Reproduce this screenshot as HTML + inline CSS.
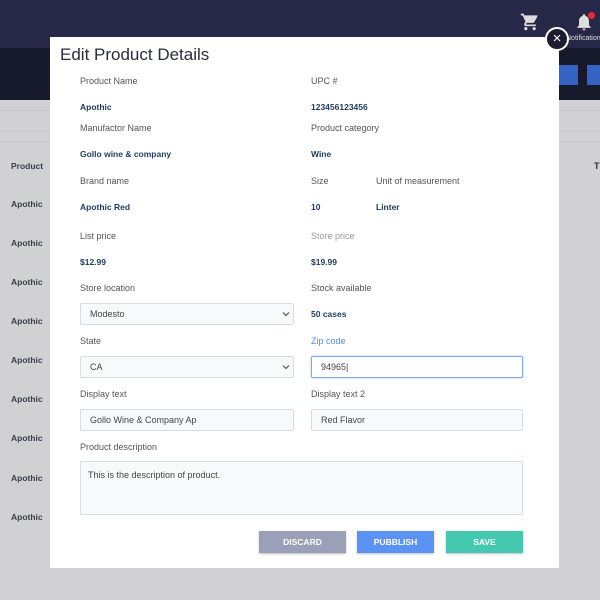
<!DOCTYPE html>
<html><head><style>
*{margin:0;padding:0;box-sizing:border-box}
body{width:600px;height:600px;position:relative;overflow:hidden;background:#d1d1d4;font-family:"Liberation Sans",sans-serif}
.a{position:absolute;white-space:nowrap}
.l{font-size:9px;color:#555;line-height:12px}
.v{font-size:8.5px;color:#1f3a5e;font-weight:bold;line-height:12px}
.box{position:absolute;background:#f8f9fb;border:1px solid #d8dce2;border-radius:2px;font-size:9px;color:#444;padding-left:9px;display:flex;align-items:center}
.btn{position:absolute;height:22px;top:531px;color:#fff;font-size:8.5px;font-weight:bold;display:flex;align-items:center;justify-content:center;box-shadow:0 1px 2px rgba(0,0,0,.25)}
.row{position:absolute;left:0;width:60px;font-size:8.5px;font-weight:bold;color:#3a3d4a;padding-left:11px}
.sep{position:absolute;left:0;width:600px;height:1px;background:#c4c6cc}
</style></head><body>
<div class="a" style="left:0;top:0;width:600px;height:48px;background:#272848"></div>
<div class="a" style="left:0;top:48px;width:600px;height:52px;background:#171a2b"></div>
<div class="a" style="left:520px;top:65px;width:58px;height:20px;background:#3563c4"></div>
<div class="a" style="left:587px;top:65px;width:20px;height:20px;background:#3563c4"></div>
<div class="sep" style="top:110px"></div>
<div class="sep" style="top:131px"></div>
<div class="sep" style="top:141px"></div>
<div class="row" style="top:161px">Product</div>
<div class="a" style="left:594px;top:161px;font-size:9px;font-weight:bold;color:#333">T</div>
<div class="row" style="top:199px">Apothic</div>
<div class="row" style="top:238px">Apothic</div>
<div class="row" style="top:277px">Apothic</div>
<div class="row" style="top:316px">Apothic</div>
<div class="row" style="top:355px">Apothic</div>
<div class="row" style="top:394px">Apothic</div>
<div class="row" style="top:433px">Apothic</div>
<div class="row" style="top:473px">Apothic</div>
<div class="row" style="top:512px">Apothic</div>
<!-- cart -->
<svg class="a" style="left:520px;top:12px" width="20" height="20" viewBox="0 0 24 24"><path fill="#ddd" d="M7 18c-1.1 0-2 .9-2 2s.9 2 2 2 2-.9 2-2-.9-2-2-2zM1 2v2h2l3.6 7.6L5.2 14c-.1.3-.2.6-.2 1 0 1.1.9 2 2 2h12v-2H7.4c-.1 0-.2-.1-.2-.2v-.1l.9-1.7h7.4c.8 0 1.4-.4 1.7-1l3.6-6.5L21 4H5.2l-.9-2H1zm16 16c-1.1 0-2 .9-2 2s.9 2 2 2 2-.9 2-2-.9-2-2-2z"/></svg>
<svg class="a" style="left:574px;top:11px" width="20" height="22" viewBox="0 0 24 24"><path fill="#ddd" d="M12 22c1.1 0 2-.9 2-2h-4c0 1.1.9 2 2 2zm6-6v-5c0-3.1-1.6-5.6-4.5-6.3V4c0-.8-.7-1.5-1.5-1.5s-1.5.7-1.5 1.5v.7C7.6 5.4 6 7.9 6 11v5l-2 2v1h16v-1l-2-2z"/></svg>
<div class="a" style="left:588px;top:12px;width:7px;height:7px;border-radius:50%;background:#e8283c"></div>
<div class="a" style="left:566px;top:35px;font-size:7px;color:#ddd">Notifications</div>
<!-- modal -->
<div class="a" style="left:50px;top:37px;width:509px;height:531px;background:#fff"></div>
<div class="a" style="left:545px;top:27px;width:24px;height:24px;border-radius:50%;background:#1c1d30;border:2px solid #fff;color:#fff;font-size:15px;line-height:19px;text-align:center">×</div>
<div class="a" style="left:60px;top:44px;font-size:17px;color:#2a2d38;line-height:22px">Edit Product Details</div>
<div class="a l" style="left:80px;top:75px">Product Name</div>
<div class="a l" style="left:311px;top:75px">UPC #</div>
<div class="a v" style="left:80px;top:101px">Apothic</div>
<div class="a v" style="left:311px;top:101px">123456123456</div>
<div class="a l" style="left:80px;top:122px">Manufactor Name</div>
<div class="a l" style="left:311px;top:122px">Product category</div>
<div class="a v" style="left:80px;top:148px">Gollo wine &amp; company</div>
<div class="a v" style="left:311px;top:148px">Wine</div>
<div class="a l" style="left:80px;top:175px">Brand name</div>
<div class="a l" style="left:311px;top:175px">Size</div>
<div class="a l" style="left:376px;top:175px">Unit of measurement</div>
<div class="a v" style="left:80px;top:201px">Apothic Red</div>
<div class="a v" style="left:311px;top:201px">10</div>
<div class="a v" style="left:376px;top:201px">Linter</div>
<div class="a l" style="left:80px;top:230px">List price</div>
<div class="a l" style="left:311px;top:230px;color:#999">Store price</div>
<div class="a v" style="left:80px;top:256px">$12.99</div>
<div class="a v" style="left:311px;top:256px">$19.99</div>
<div class="a l" style="left:80px;top:282px">Store location</div>
<div class="a l" style="left:311px;top:282px">Stock available</div>
<div class="box" style="left:80px;top:303px;width:214px;height:22px">Modesto</div>
<svg class="a" style="left:282px;top:310px" width="8" height="8" viewBox="0 0 8 8"><path d="M1 2.5l3 3 3-3" stroke="#555" fill="none" stroke-width="1.2"/></svg>
<div class="a v" style="left:311px;top:308px">50 cases</div>
<div class="a l" style="left:80px;top:335px">State</div>
<div class="a l" style="left:311px;top:335px;color:#4a90f0">Zip code</div>
<div class="box" style="left:80px;top:356px;width:214px;height:22px">CA</div>
<svg class="a" style="left:282px;top:363px" width="8" height="8" viewBox="0 0 8 8"><path d="M1 2.5l3 3 3-3" stroke="#555" fill="none" stroke-width="1.2"/></svg>
<div class="box" style="left:311px;top:356px;width:212px;height:22px;background:#fff;border:1px solid #7aa8f0;box-shadow:0 0 2px #a8c6f5">94965|</div>
<div class="a l" style="left:80px;top:388px">Display text</div>
<div class="a l" style="left:311px;top:388px">Display text 2</div>
<div class="box" style="left:80px;top:409px;width:214px;height:22px">Gollo Wine &amp; Company Ap</div>
<div class="box" style="left:311px;top:409px;width:212px;height:22px">Red Flavor</div>
<div class="a l" style="left:80px;top:441px">Product description</div>
<div class="box" style="left:80px;top:461px;width:443px;height:54px;align-items:flex-start;padding-top:8px;padding-left:7px">This is the description of product.</div>
<div class="btn" style="left:259px;width:87px;background:#9aa0b8">DISCARD</div>
<div class="btn" style="left:357px;width:77px;background:#5b93f5">PUBBLISH</div>
<div class="btn" style="left:446px;width:77px;background:#44c8b0">SAVE</div>
</body></html>
